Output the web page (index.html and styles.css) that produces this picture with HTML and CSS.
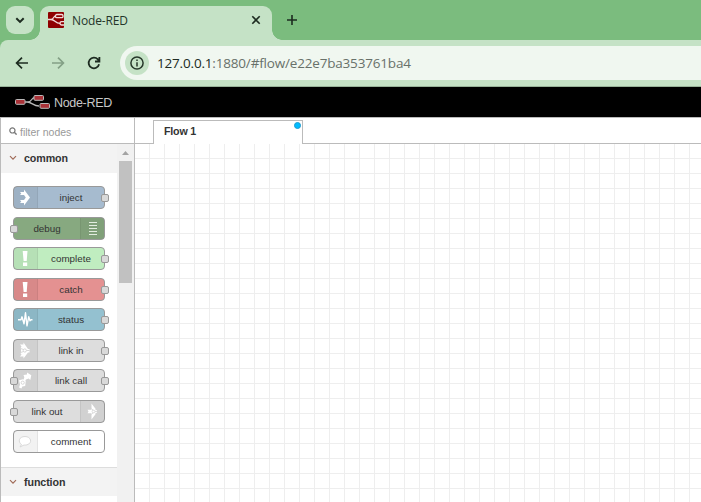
FILE: index.html
```html
<!DOCTYPE html>
<html lang="en">
<head>
<meta charset="utf-8">
<title>Node-RED</title>
<link rel="stylesheet" href="styles.css">
</head>
<body>
<div class="tabstrip">
  <div class="tab-search"><svg width="28" height="28" viewBox="0 0 28 28"><path d="M10.300 12.200 14 15.900l3.700-3.700" fill="none" stroke="#1d2b20" stroke-width="2"/></svg></div>
  <div class="browser-tab">
    <svg class="favicon" width="16" height="16" viewBox="0 0 16 16"><rect width="16" height="16" rx="1" fill="#8f0000"/><g fill="none" stroke="#f2dada" stroke-width="1.300"><path d="M0 7.500h3c3 0 2-3.500 5-3.500M3 7.500c4 0 4 3.800 9 3.800"/><rect x="7.500" y="2.500" width="7.500" height="3.200" rx="1.300"/><path d="M16 9.700h-2.500q-1.500 0-1.500 1.600t1.500 1.700H16"/></g></svg>
    <span class="browser-title">Node-RED</span>
    <svg class="close" width="10" height="10" viewBox="0 0 10 10"><path d="M1.300 1.300l7.400 7.400M8.700 1.300 1.300 8.700" stroke="#1d2b20" stroke-width="1.600"/></svg>
  </div>
  <svg class="new-tab" width="12" height="12" viewBox="0 0 12 12"><path d="M6 1v10M1 6h10" stroke="#1d2b20" stroke-width="1.600"/></svg>
</div>
<div class="toolbar">
  <div class="toolbar-inner">
    <svg class="nav-icon" width="16" height="16" viewBox="0 0 16 16"><path d="M14 8H3M8 2.600 2.600 8 8 13.400" fill="none" stroke="#1d2b20" stroke-width="1.700"/></svg>
    <svg class="nav-icon" width="16" height="16" viewBox="0 0 16 16"><path d="M2 8h11M8 2.600 13.400 8 8 13.400" fill="none" stroke="#84a086" stroke-width="1.700"/></svg>
    <svg class="nav-icon" width="16" height="16" viewBox="0 0 16 16"><path d="M13.100 9.300A5.300 5.300 0 1 1 11.900 4.400L13.200 6M13.400 2v4.500H9" fill="none" stroke="#1d2b20" stroke-width="1.800"/></svg>
    <div class="address">
      <span class="site-info"><svg width="14" height="14" viewBox="0 0 14 14"><circle cx="7" cy="7" r="6.100" fill="none" stroke="#26372a" stroke-width="1.500"/><path d="M7 6.200v4.200M7 3.600v1.500" stroke="#26372a" stroke-width="1.500"/></svg></span>
      <span class="url"><b>127.0.0.1</b>:1880/#flow/e22e7ba353761ba4</span>
    </div>
  </div>
</div>
<header class="app-header">
  <svg width="36" height="16" viewBox="0 0 36 16"><g fill="none" stroke="#b9b9b9" stroke-width="1.300"><path d="M10 8h3c4 0 3-4.500 7-4.500M12 8c5 0 6 4 12 4"/></g><g fill="#a93238" stroke="#b9b9b9" stroke-width="1"><rect x=".5" y="5.500" width="9.500" height="4.800" rx="1"/><rect x="19" y="1.500" width="9.500" height="4.800" rx="1"/><rect x="25" y="9.500" width="9.500" height="4.800" rx="1"/></g></svg>
  <span>Node-RED</span>
</header>
<main class="workspace">
  <aside class="palette">
    <div class="search">
      <svg width="8" height="8" viewBox="0 0 8 8"><circle cx="3.400" cy="3.400" r="2.600" fill="none" stroke="#777" stroke-width="1.200"/><path d="M5.300 5.300 7.600 7.600" stroke="#777" stroke-width="1.400"/></svg>
      <span>filter nodes</span>
    </div>
    <div class="palette-body">
      <div class="categories">
        <div class="category"><svg width="8" height="6" viewBox="0 0 8 6"><path d="M1 1.200 4 4.200l3-3" fill="none" stroke="#a06b58" stroke-width="1.200"/></svg>common</div>
        <div class="nodes">
          <div class="node inject"><i class="icon"><svg width="24" height="21" viewBox="0 0 24 21"><path d="M6 5h4V2.500l6 8-6 8V16H6l1.300-1.500L6 13h4l1.800-2.500L10 8H6l1.300-1.500z" fill="#fff"/></svg></i><span>inject</span><b class="port out"></b></div>
          <div class="node debug flip"><i class="icon"><svg width="24" height="21" viewBox="0 0 24 21"><path d="M8 4.500h8M8 7.500h8M8 10.500h8M8 13.500h8M8 16.500h8" stroke="#e3ede0"/></svg></i><span>debug</span><b class="port in"></b></div>
          <div class="node complete"><i class="icon"><svg width="24" height="21" viewBox="0 0 24 21"><path d="M8.700 3h4.800L12.700 13H9.600zM9 14.500h4.200V18H9z" fill="#fff"/></svg></i><span>complete</span><b class="port out"></b></div>
          <div class="node catch"><i class="icon"><svg width="24" height="21" viewBox="0 0 24 21"><path d="M8.700 3h4.800L12.700 13H9.600zM9 14.500h4.200V18H9z" fill="#fff"/></svg></i><span>catch</span><b class="port out"></b></div>
          <div class="node status"><i class="icon"><svg width="24" height="21" viewBox="0 0 24 21"><path d="M4 10.800h3l1-3 2 7 1.500-11 1.500 13 1.700-9 1.300 4 1-1h1.500" fill="none" stroke="#fff" stroke-width="1.400" stroke-linejoin="round"/></svg></i><span>status</span><b class="port out"></b></div>
          <div class="node link"><i class="icon"><svg width="24" height="21" viewBox="0 0 24 21"><path d="M6 4.500h3.500V2.500L14 9h1.500v3.500H14l-4.500 6v-2H6l1.500-2L6 12.500h1V9H6l1.500-2.500z" fill="#fff"/><path d="M6 8.300l3.500 1.200M6 12.700l3.500-1.200M12.500 10.500h3" stroke="#d2d2d2" stroke-width=".9"/><circle cx="10.800" cy="10.500" r="1.600" fill="none" stroke="#d2d2d2" stroke-width=".9"/></svg></i><span>link in</span><b class="port out"></b></div>
          <div class="node link call"><i class="icon"><svg width="24" height="21" viewBox="0 0 24 21"><path d="M9.500 5 13 4.600V2.500l4.300 2.800-1 4.700-1.600-1.500-2.700.9-.8 1.400-1.600-.9.700-2.600zM5 10.200l4-1 2.800 1.600-.6 5.200-2.900.5-.8 2-2.500-1 1-3z" fill="#fff"/><circle cx="8.700" cy="12.700" r="1.600" fill="none" stroke="#d2d2d2" stroke-width=".9"/></svg></i><span>link call</span><b class="port in"></b><b class="port out"></b></div>
          <div class="node link flip"><i class="icon"><svg width="24" height="21" viewBox="0 0 24 21"><path d="M6.500 8.800h4V2.500l4 5.200v1.500h1.500v2.600h-1.500v1.500l-4 5.200v-6.300h-4l1-1.700z" fill="#fff"/><path d="M10.500 7.500l1.800 2M10.500 13.500l1.800-2M14 10.500h2" stroke="#d2d2d2" stroke-width=".8"/><circle cx="12.500" cy="10.500" r="1.400" fill="none" stroke="#d2d2d2" stroke-width=".8"/></svg></i><span>link out</span><b class="port in"></b></div>
          <div class="node comment"><i class="icon"><svg width="24" height="21" viewBox="0 0 24 21"><path d="M7.500 13.500C3.500 11 5 5.500 11 5.500s8 6.500 2 8.300c-1.200.4-2.500.3-3 .2L6 16z" fill="#fff" stroke="#d9d9d9"/></svg></i><span>comment</span></div>
        </div>
        <div class="category function"><svg width="8" height="6" viewBox="0 0 8 6"><path d="M1 1.200 4 4.200l3-3" fill="none" stroke="#a06b58" stroke-width="1.200"/></svg>function</div>
      </div>
      <div class="scrollbar"><svg width="7" height="4" viewBox="0 0 7 4"><path d="M0 4 3.500 0 7 4z" fill="#a3a3a3"/></svg><div class="thumb"></div></div>
    </div>
  </aside>
  <section class="editor">
    <div class="flow-tabs"><div class="flow-tab">Flow 1<i class="changed"></i></div></div>
    <div class="canvas"></div>
  </section>
</main>
</body>
</html>
```
FILE: styles.css
```css
* { box-sizing: border-box; }
body {
  margin: 0;
  width: 701px;
  height: 502px;
  display: flex;
  flex-direction: column;
  overflow: hidden;
  background: #fff;
  font-family: "Liberation Sans", Arial, sans-serif;
}
svg { display: block; flex: none; }
.tabstrip {
  height: 40px;
  flex: none;
  display: flex;
  padding: 6px 0 0 6px;
  background: #7bbc7e;
}
.tab-search { width: 28px; height: 28px; border-radius: 9px; background: #c5e2c6; }
.browser-tab {
  position: relative;
  width: 232px;
  height: 34px;
  margin-left: 6px;
  padding: 0 11px 6px 8px;
  display: flex;
  align-items: center;
  border-radius: 9px 9px 0 0;
  background: #c5e2c6;
}
.browser-tab::before,
.browser-tab::after {
  content: "";
  position: absolute;
  bottom: 0;
  width: 10px;
  height: 10px;
}
.browser-tab::before { left: -10px; background: radial-gradient(circle at 0 0, transparent 9.500px, #c5e2c6 10px); }
.browser-tab::after { right: -10px; background: radial-gradient(circle at 100% 0, transparent 9.500px, #c5e2c6 10px); }
.browser-title { margin-left: 8px; padding-top: 1px; font: 12px/16px "Open Sans", "Noto Sans", sans-serif; letter-spacing: -.15px; color: #24352a; }
.close { margin-left: auto; }
.new-tab { margin: 8px 0 0 14px; }
.toolbar { height: 47px; flex: none; background: #7bbc7e; }
.toolbar-inner {
  height: 47px;
  display: flex;
  align-items: center;
  gap: 20px;
  padding-left: 14px;
  border-bottom: 1px solid #98b399;
  border-top-left-radius: 8px;
  background: #c5e2c6;
}
.address {
  flex: 1;
  height: 34px;
  margin-left: -2px;
  padding-left: 5px;
  display: flex;
  align-items: center;
  border-radius: 17px 0 0 17px;
  background: #f0f7f0;
}
.site-info {
  width: 24px;
  height: 24px;
  display: grid;
  place-items: center;
  border-radius: 50%;
  background: #c5e2c6;
}
.url { margin-left: 8px; font: 13.500px/20px "Open Sans", "Noto Sans", sans-serif; letter-spacing: -.18px; color: #68716a; white-space: nowrap; }
.url b { font-weight: 400; color: #202b23; }
.app-header {
  height: 30px;
  flex: none;
  display: flex;
  align-items: center;
  gap: 3px;
  padding-left: 15px;
  background: #000;
  color: #c7c7c7;
  font-size: 12.500px;
  letter-spacing: -.32px;
}
.app-header span { padding-top: 2px; }
.workspace { flex: 1; min-height: 0; display: flex; border-top: 1px solid #bbb; }
.palette {
  width: 135px;
  display: flex;
  flex-direction: column;
  border-left: 1px solid #bbb;
  border-right: 1px solid #bbb;
}
.search {
  height: 26px;
  flex: none;
  display: flex;
  align-items: center;
  gap: 3px;
  padding-left: 8px;
  border-bottom: 1px solid #bbb;
  color: #999;
  font-size: 10.500px;
}
.search span { padding-top: 3px; }
.palette-body { flex: 1; min-height: 0; display: flex; }
.categories { width: 116px; overflow: hidden; }
.category {
  height: 28.500px;
  display: flex;
  align-items: center;
  gap: 7px;
  padding-left: 8px;
  background: #f3f3f3;
  color: #333;
  font-size: 10.700px;
  font-weight: bold;
  letter-spacing: -.1px;
}
.category.function { height: 29px; border-top: 1px solid #ddd; }
.nodes {
  height: 294.500px;
  padding: 13.500px 0 0 12px;
  display: flex;
  flex-direction: column;
  gap: 7.500px;
}
.node {
  position: relative;
  width: 92px;
  height: 23px;
  flex: none;
  display: flex;
  border: 1px solid #999;
  border-radius: 4px;
  color: #333;
  font-size: 9.800px;
}
.node.flip { flex-direction: row-reverse; }
.node span { flex: 1; text-align: center; line-height: 22px; }
.icon { width: 24px; background: rgba(0, 0, 0, .05); border-right: 1px solid rgba(0, 0, 0, .06); }
.flip .icon { border-right: 0; border-left: 1px solid rgba(0, 0, 0, .06); }
.inject { background: #a6bbcf; }
.debug { background: #87a980; }
.complete { background: #c0edc0; }
.catch { background: #e49191; }
.status { background: #94c1d0; }
.link { background: #ddd; }
.comment { background: #fff; }
.port {
  position: absolute;
  top: 7px;
  width: 8px;
  height: 8px;
  border: 1px solid #999;
  border-radius: 2px;
  background: #d9d9d9;
}
.port.in { left: -4px; }
.port.out { right: -5px; }
.scrollbar {
  width: 17px;
  display: flex;
  flex-direction: column;
  align-items: center;
  padding-top: 7px;
  background: #f1f1f1;
}
.thumb { width: 13px; height: 122px; margin-top: 6px; background: #c1c1c1; }
.editor { flex: 1; display: flex; flex-direction: column; }
.flow-tabs { height: 26px; border-bottom: 1px solid #bbb; padding: 2px 0 0 18px; }
.flow-tab {
  position: relative;
  width: 150px;
  height: 24px;
  padding-left: 10px;
  border: 1px solid #bbb;
  border-bottom: 0;
  background: #fff;
  color: #333;
  font-size: 10.700px;
  font-weight: bold;
  letter-spacing: -.2px;
  line-height: 21px;
}
.changed {
  position: absolute;
  top: 1px;
  right: 1px;
  width: 7px;
  height: 7px;
  border: 1px solid #1e9bd0;
  border-radius: 50%;
  background: #00bcff;
}
.canvas {
  flex: 1;
  background-image: linear-gradient(to left, #eee 1px, transparent 1px), linear-gradient(to top, #eee 1px, transparent 1px);
  background-size: 15px 15px;
}
```
